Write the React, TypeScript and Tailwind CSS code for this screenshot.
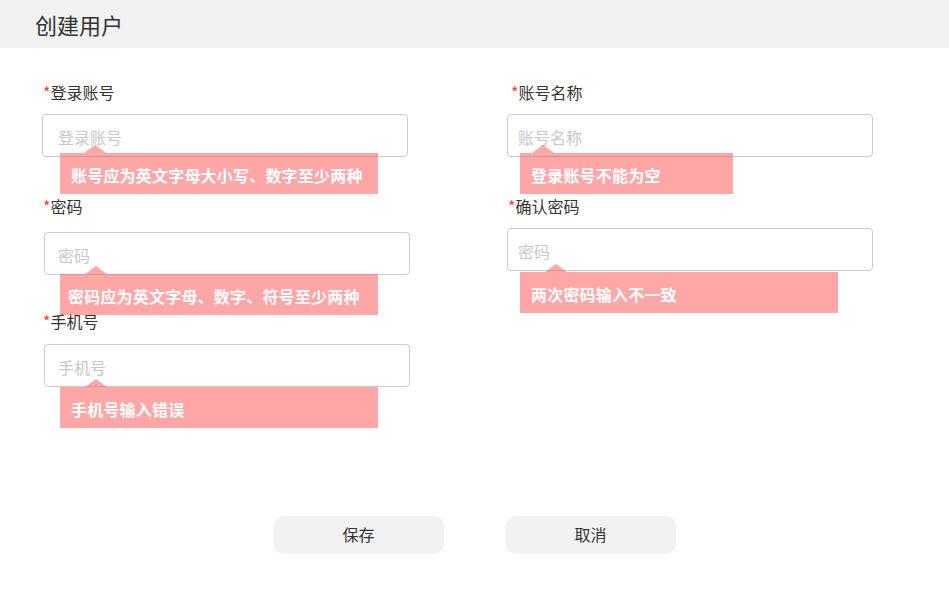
import type { ReactNode } from "react";

const font = { fontFamily: '"Microsoft YaHei", "Noto Sans CJK SC", "Noto Sans", sans-serif' };

function Label({ children, className = "" }: { children: ReactNode; className?: string }) {
  return (
    <div className={`h-5 text-[16px] leading-5 text-[#333] ${className}`}>
      <span className="text-[#ff3b3b]">*</span>
      {children}
    </div>
  );
}

function ErrorTip({
  text,
  className,
  arrowClass,
}: {
  text: string;
  className: string;
  arrowClass: string;
}) {
  return (
    <div
      className={`absolute h-[41px] bg-[rgba(255,80,80,0.5)] pt-3 text-[16px] font-bold leading-5 tracking-[0.2px] text-white whitespace-nowrap ${className}`}
    >
      {/* arrow pointing at the input */}
      <span
        className={`absolute -top-2 h-0 w-0 border-x-[11px] border-b-8 border-x-transparent border-b-[rgba(255,80,80,0.5)] ${arrowClass}`}
      />
      {text}
    </div>
  );
}

function TextInput({
  placeholder,
  className = "",
  padClass = "pl-[15px]",
  children,
}: {
  placeholder: string;
  className?: string;
  padClass?: string;
  children?: ReactNode;
}) {
  return (
    <div className={`relative w-[366px] ${className}`}>
      <div
        className={`flex h-[43px] items-center rounded border border-[#cccccc] bg-white pt-[2px] text-[16px] text-[#c8c8c8] ${padClass}`}
      >
        {placeholder}
      </div>
      {children}
    </div>
  );
}

export default function App() {
  return (
    <div className="min-h-[609px] bg-white" style={font}>
      {/* Header */}
      <div className="flex h-12 items-center bg-[#f2f2f2] pb-px pl-[35px]">
        <h1 className="text-[22px] leading-none text-[#333]">创建用户</h1>
      </div>

      {/* Form */}
      <div className="flex pt-[34px]">
        <div className="ml-[42px] w-[368px]">
          <Label className="ml-px">登录账号</Label>
          <TextInput placeholder="登录账号" className="mt-3">
            <ErrorTip
              text="账号应为英文字母大小写、数字至少两种"
              className="left-[18px] top-[39px] w-[318px] pl-[11px]"
              arrowClass="left-[24px]"
            />
          </TextInput>

          <Label className="ml-px mt-[39px]">密码</Label>
          <TextInput placeholder="密码" className="ml-[2px] mt-4" padClass="pl-[13px]">
            <ErrorTip
              text="密码应为英文字母、数字、符号至少两种"
              className="left-4 top-[42px] w-[318px] pl-2"
              arrowClass="left-[25px]"
            />
          </TextInput>

          <Label className="ml-px mt-9">手机号</Label>
          <TextInput placeholder="手机号" className="ml-[2px] mt-[13px]" padClass="pl-[13px]">
            <ErrorTip
              text="手机号输入错误"
              className="left-4 top-[43px] w-[318px] pl-[11px]"
              arrowClass="left-[25px]"
            />
          </TextInput>
        </div>

        <div className="ml-[97px] w-[366px]">
          <Label className="ml-1">账号名称</Label>
          <TextInput placeholder="账号名称" className="mt-3" padClass="pl-[10px]">
            <ErrorTip
              text="登录账号不能为空"
              className="left-[13px] top-[39px] w-[213px] pl-[11px]"
              arrowClass="left-[12px]"
            />
          </TextInput>

          <Label className="ml-px mt-[39px]">确认密码</Label>
          <TextInput placeholder="密码" className="mt-3" padClass="pl-[10px]">
            <ErrorTip
              text="两次密码输入不一致"
              className="left-[13px] top-[44px] w-[318px] pl-[11px]"
              arrowClass="left-[25px]"
            />
          </TextInput>
        </div>
      </div>

      {/* Actions */}
      <div className="mt-[129px] flex justify-center gap-[62px]">
        <button className="h-[38px] w-[170px] rounded-[10px] bg-[#f2f2f2] pb-[3px] text-[16px] text-[#333]">
          保存
        </button>
        <button className="h-[38px] w-[170px] rounded-[10px] bg-[#f2f2f2] pb-[3px] text-[16px] text-[#333]">
          取消
        </button>
      </div>
    </div>
  );
}
